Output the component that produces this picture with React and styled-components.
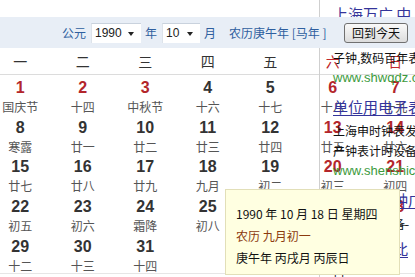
import styled, { createGlobalStyle } from "styled-components";

const GlobalStyle = createGlobalStyle`
  html, body {
    margin: 0;
    padding: 0;
    background: #fff;
    overflow: hidden;
  }
  body {
    font-family: "Liberation Sans", "Noto Sans CJK SC", sans-serif;
  }
`;

const CJK = `"Noto Sans CJK SC", "Liberation Sans", sans-serif`;

const Page = styled.div`
  position: relative;
  width: 415px;
  height: 277px;
  padding-top: 17px;
  box-sizing: border-box;
  overflow: hidden;
`;

const Toolbar = styled.div`
  position: relative;
  z-index: 2;
  width: 415px;
  height: 31px;
  box-sizing: border-box;
  display: flex;
  align-items: center;
  padding: 0 7px 0 62px;
  background: #e8eef6;
  color: #2f5f9f;
  font-family: ${CJK};
  font-size: 12px;
  white-space: nowrap;
`;

const Label = styled.span`
  margin-left: ${(p) => p.$gap || 0}px;
  line-height: 20px;
`;

const SelectBox = styled.div`
  position: relative;
  width: ${(p) => p.$width}px;
  height: 20px;
  margin-left: 5px;
  margin-right: 4px;
  box-sizing: border-box;
  background: #fff;
  border-top: 1px solid #c9d2dd;
  border-left: 1px solid #dde3ea;
  padding-left: 3px;
  color: #222;
  font-family: "Liberation Sans", sans-serif;
  font-size: 12px;
  line-height: 18px;

  &::after {
    content: "";
    position: absolute;
    right: 7px;
    top: 8px;
    border-left: 3.5px solid transparent;
    border-right: 3.5px solid transparent;
    border-top: 4px solid #222;
  }
`;

const TodayButton = styled.button`
  flex: none;
  margin-left: auto;
  width: 64px;
  height: 20px;
  padding: 0;
  border: 1px solid #707070;
  border-radius: 3px;
  background: linear-gradient(#fafafa, #dcdcdc);
  color: #111;
  font-family: ${CJK};
  font-size: 12px;
  line-height: 18px;
`;

const Grid = styled.div`
  display: grid;
  grid-template-columns: repeat(7, 62.5px);
  margin-left: -11px;
`;

const WeekRow = styled(Grid)`
  height: 26px;
  align-items: center;
  border-bottom: 1px solid #dcdcdc;
  font-family: ${CJK};
  font-size: 14px;
`;

const WeekDay = styled.div`
  text-align: center;
  color: ${(p) => (p.$red ? "#c0282d" : "#333")};
`;

const Days = styled(Grid)`
  grid-auto-rows: 39.7px;
  border-bottom: 1px solid #e6e6e6;
`;

const Cell = styled.div`
  display: flex;
  flex-direction: column;
  align-items: center;
  padding-top: 3px;
`;

const Num = styled.div`
  font-family: "Liberation Sans", sans-serif;
  font-weight: bold;
  font-size: 16px;
  line-height: 19px;
  color: ${(p) => (p.$red ? "#b3262b" : "#333")};
`;

const Lunar = styled.div`
  font-family: ${CJK};
  font-size: 12px;
  line-height: 19px;
  color: #555;
`;

const AdPanel = styled.div`
  position: absolute;
  z-index: 1;
  left: 319px;
  top: 0;
  bottom: 0;
  width: 96px;
  padding-left: 13px;
  box-sizing: border-box;
  border-left: 1px solid #cfcfcf;
  overflow: hidden;
  white-space: nowrap;
`;

const AdBlock = styled.div`
  display: flex;
  flex-direction: column;
`;

const AdTitle = styled.div`
  font-family: ${CJK};
  font-size: 15px;
  line-height: 20px;
  height: 24px;
  margin-top: ${(p) => p.$top || 0}px;
  color: #34349a;
  text-decoration: ${(p) => (p.$plain ? "none" : "underline")};
  text-underline-offset: 2px;
`;

const AdText = styled.div`
  font-family: ${CJK};
  font-size: 12px;
  line-height: 20px;
  color: #111;
`;

const AdUrl = styled.div`
  font-family: "Liberation Sans", sans-serif;
  font-size: 13px;
  line-height: 19px;
  color: #3c9a3c;
  margin-bottom: 10px;
`;

const Tooltip = styled.div`
  position: absolute;
  z-index: 3;
  left: 225px;
  top: 189px;
  width: 175px;
  height: 86px;
  box-sizing: border-box;
  padding: 13px 0 0 10px;
  background: #ffffe1;
  border: 1px solid #e2dfb8;
  font-family: ${CJK};
  font-size: 12px;
  line-height: 22px;
  color: #111;
`;

const TipLine = styled.div`
  color: ${(p) => (p.$brown ? "#8b3a0e" : "#111")};
`;

const weekDays = ["一", "二", "三", "四", "五", "六", "日"];

const lunar = [
  "国庆节", "十四", "中秋节", "十六", "十七", "十八", "十九",
  "寒露", "廿一", "廿二", "廿三", "廿四", "廿五", "廿六",
  "廿七", "廿八", "廿九", "九月", "初二", "初三", "初四",
  "初五", "初六", "霜降", "初八", "初九", "初十", "十一",
  "十二", "十三", "十四",
];

const holidays = [1, 2, 3];

const ads = [
  { title: "上海万广 中", lines: ["电子钟,数码", "子钟,数码百年表"], url: "www.shwqdz.com" },
  { title: "单位用电子表", lines: ["上海申时钟表发", "产钟表计时设备"], url: "www.shenshic.com" },
];

function App() {
  return (
    <Page>
      <GlobalStyle />
      <Toolbar>
        <Label>公元</Label>
        <SelectBox $width={50}>1990</SelectBox>
        <Label>年</Label>
        <SelectBox $width={38}>10</SelectBox>
        <Label>月</Label>
        <Label $gap={13}>农历庚午年 [马年 ]</Label>
        <TodayButton>回到今天</TodayButton>
      </Toolbar>

      <WeekRow>
        {weekDays.map((d, i) => (
          <WeekDay key={d} $red={i > 4}>
            {d}
          </WeekDay>
        ))}
      </WeekRow>

      <Days>
        {lunar.map((l, i) => {
          const day = i + 1;
          const red = holidays.includes(day) || i % 7 > 4;
          return (
            <Cell key={day}>
              <Num $red={red}>{day}</Num>
              <Lunar>{l}</Lunar>
            </Cell>
          );
        })}
      </Days>

      <AdPanel>
        {ads.map((ad, i) => (
          <AdBlock key={ad.url}>
            <AdTitle $top={i === 0 ? 4 : 0} $plain={i === 0}>
              {ad.title}
            </AdTitle>
            {ad.lines.map((t) => (
              <AdText key={t}>{t}</AdText>
            ))}
            <AdUrl>{ad.url}</AdUrl>
          </AdBlock>
        ))}
        <AdBlock>
          <AdTitle>上海电子钟广</AdTitle>
          <AdText>钟表计时设备-</AdText>
          <AdTitle $top={5}>选购请到此</AdTitle>
          <AdText>占</AdText>
        </AdBlock>
      </AdPanel>

      <Tooltip>
        <TipLine>1990 年 10 月 18 日 星期四</TipLine>
        <TipLine $brown>农历 九月初一</TipLine>
        <TipLine>庚午年 丙戌月 丙辰日</TipLine>
      </Tooltip>
    </Page>
  );
}

export default App;
